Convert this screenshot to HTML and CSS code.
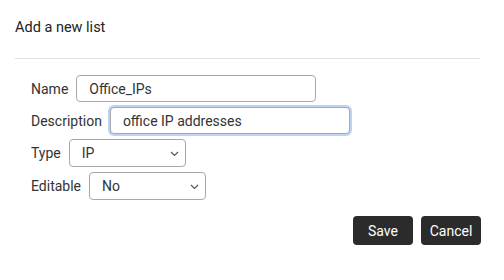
FILE: index.html
```html
<!DOCTYPE html>
<html lang="en">
<head>
  <meta charset="UTF-8" />
  <title>Add a new list</title>
  <link rel="stylesheet" href="styles.css">
</head>
<body>

<div class="panel">
  <div class="panel-title">Add a new list</div>
  <div class="divider"></div>

  <form class="list-form">
    <div class="form-row">
      <label for="name">Name</label>
      <input type="text" id="name" class="field name-field" value="Office_IPs">
    </div>
    <div class="form-row">
      <label for="desc">Description</label>
      <input type="text" id="desc" class="field desc-field focused" value="office IP addresses" autofocus>
    </div>
    <div class="form-row">
      <label for="type">Type</label>
      <div class="select-wrap">
        <select id="type" class="field select-field">
          <option>IP</option>
          <option>Domain</option>
        </select>
        <svg class="chevron" width="9" height="6" viewBox="0 0 9 6"><path d="M1 1l3.5 3.5L8 1" fill="none" stroke="#555" stroke-width="1.2"/></svg>
      </div>
    </div>
    <div class="form-row">
      <label for="editable">Editable</label>
      <div class="select-wrap">
        <select id="editable" class="field select-field">
          <option>No</option>
          <option>Yes</option>
        </select>
        <svg class="chevron" width="9" height="6" viewBox="0 0 9 6"><path d="M1 1l3.5 3.5L8 1" fill="none" stroke="#555" stroke-width="1.2"/></svg>
      </div>
    </div>

    <div class="actions">
      <button type="button" class="btn">Save</button>
      <button type="button" class="btn">Cancel</button>
    </div>
  </form>
</div>

<script>
  // put the caret at the end of the description
  const desc = document.getElementById("desc");
  desc.focus();
  desc.setSelectionRange(desc.value.length, desc.value.length);
</script>

</body>
</html>
```

FILE: styles.css
```css
body {
  font-family: Roboto, "Liberation Sans", sans-serif;
  background: #fff;
  color: #222;
  margin: 0;
}
.panel {
  width: 504px;
  height: 280px;
}
.panel-title {
  font-size: 14.5px;
  line-height: 16px;
  padding: 20px 15px 0 15px;
  color: #222;
}
.divider {
  margin: 22px 24px 0 15px;
  border-top: 1px solid #e0e0e0;
}
.list-form {
  padding: 16px 0 0 31px;
}
.form-row {
  display: flex;
  align-items: center;
  gap: 8px;
  margin-bottom: 5px;
}
.form-row label {
  font-size: 14px;
  color: #333;
}
.field {
  box-sizing: border-box;
  height: 27px;
  border: 1px solid #a8a8a8;
  border-radius: 4px;
  font-family: inherit;
  font-size: 14px;
  color: #333;
  padding: 0 12px;
  background: #fff;
  outline: none;
}
.name-field {
  width: 240px;
}
.desc-field {
  width: 240px;
}
.focused {
  box-shadow: 0 0 0 2px #bcd3f2;
}
.select-wrap {
  position: relative;
}
.select-field {
  -webkit-appearance: none;
  appearance: none;
  width: 117px;
  height: 28px;
}
.chevron {
  position: absolute;
  right: 7px;
  top: 12px;
  pointer-events: none;
}
.actions {
  display: flex;
  justify-content: flex-end;
  gap: 8px;
  padding: 11px 23px 0 0;
}
.btn {
  width: 60px;
  height: 29px;
  padding: 0;
  border: none;
  border-radius: 4px;
  background: #2b2b2b;
  color: #fff;
  font-family: inherit;
  font-size: 14px;
  cursor: pointer;
}
```
